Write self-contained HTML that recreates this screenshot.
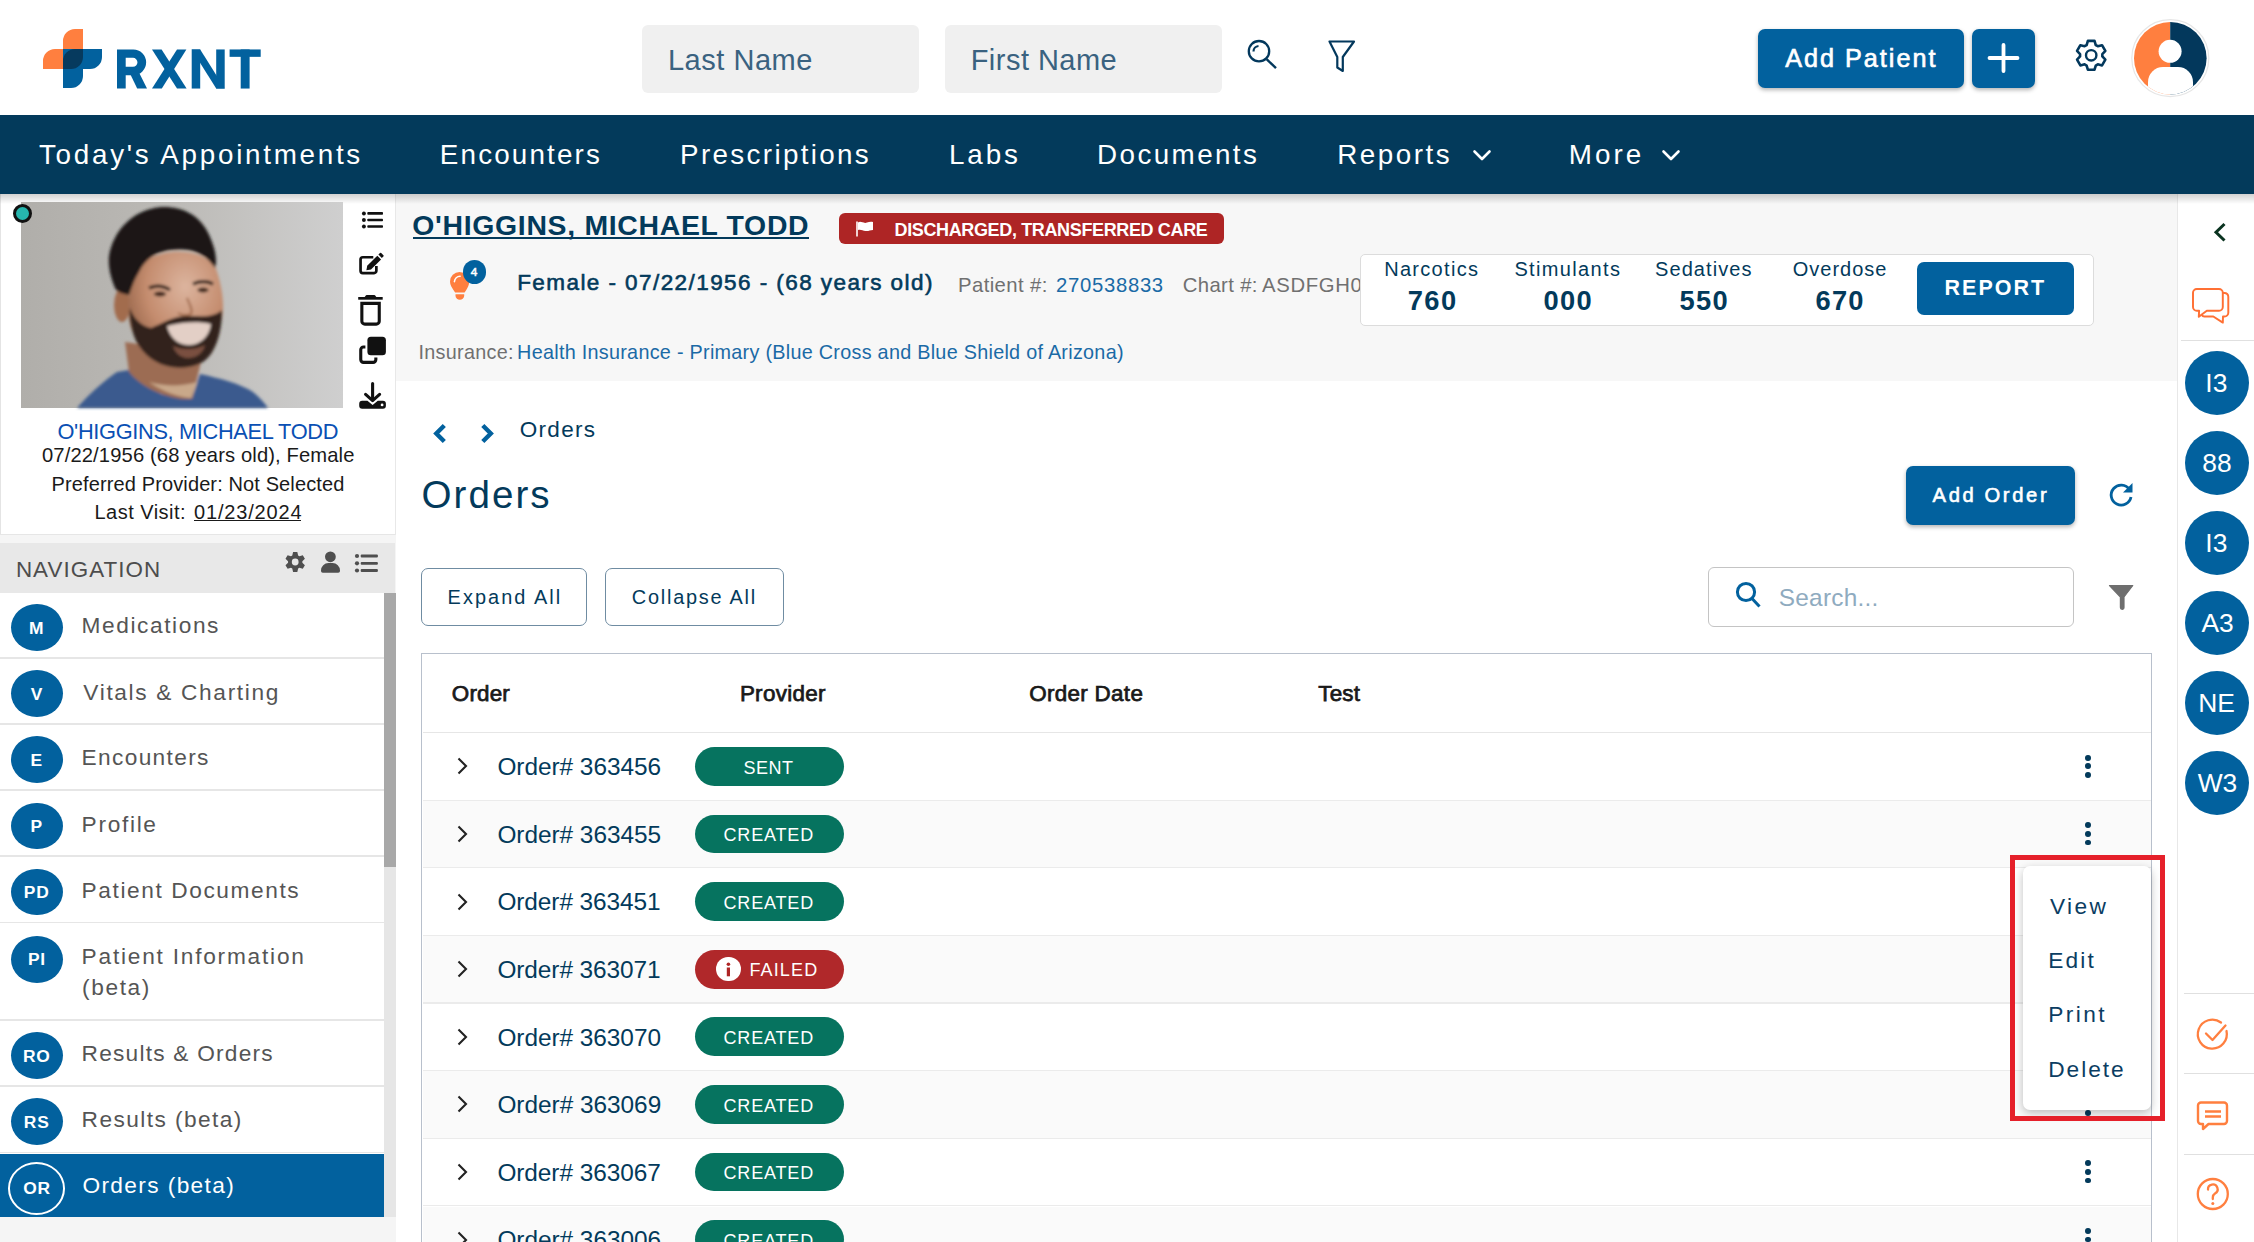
<!DOCTYPE html>
<html><head><meta charset="utf-8"><title>RXNT Orders</title>
<style>
html,body{margin:0;padding:0;width:2254px;height:1242px;overflow:hidden;background:#fff;font-family:"Liberation Sans", sans-serif;}
.t{position:absolute;line-height:1;white-space:nowrap;}
svg{overflow:visible}
</style></head><body>
<div style="position:absolute;left:0px;top:0px;width:2254px;height:115px;background:#fff"></div>
<div style="position:absolute;left:0px;top:115px;width:2254px;height:79px;background:#033a5b"></div>
<div style="position:absolute;left:0px;top:194px;width:396px;height:1048px;background:#f5f5f5"></div>
<div style="position:absolute;left:0px;top:194px;width:395px;height:341px;background:#fff"></div>
<div style="position:absolute;left:0px;top:194px;width:1px;height:341px;background:#e4e4e4"></div>
<div style="position:absolute;left:395px;top:194px;width:1px;height:341px;background:#e8e8e8"></div>
<div style="position:absolute;left:0px;top:534px;width:395px;height:1px;background:#e6e6e6"></div>
<div style="position:absolute;left:0px;top:543px;width:395px;height:50px;background:#e8e8e8"></div>
<div style="position:absolute;left:0px;top:593px;width:384px;height:624px;background:#fff"></div>
<div style="position:absolute;left:384px;top:593px;width:12px;height:624px;background:#e6e6e6"></div>
<div style="position:absolute;left:384px;top:593px;width:12px;height:274px;background:#a8a8a8"></div>
<div style="position:absolute;left:396px;top:194px;width:1781px;height:187px;background:#f7f7f7"></div>
<div style="position:absolute;left:396px;top:381px;width:1781px;height:861px;background:#fff"></div>
<div style="position:absolute;left:2177px;top:194px;width:77px;height:1048px;background:#fff"></div>
<div style="position:absolute;left:2177px;top:194px;width:1px;height:1048px;background:#e8e8e8"></div>
<div style="position:absolute;left:0px;top:194px;width:2254px;height:10px;background:linear-gradient(rgba(0,0,0,0.18),rgba(0,0,0,0))"></div>
<svg style="position:absolute;left:43px;top:29px" width="60" height="60" viewBox="0 0 60 60">
<path d="M32 0H40V40H0V32A12 12 0 0 1 12 20H20V12A12 12 0 0 1 32 0Z" fill="#ff7f3f"/>
<path d="M20 20H59V28A12 12 0 0 1 47 40H40V47A12 12 0 0 1 28 59H20Z" fill="#02619e"/>
<path d="M32 20H40V28A12 12 0 0 1 28 40H20V32A12 12 0 0 1 32 20Z" fill="#063a5e"/>
</svg>
<svg style="position:absolute;left:117px;top:48.6px" width="144" height="40" viewBox="0 0 144 39.1"><g fill="#02619e">
<path d="M0 0H16.3A12.85 12.85 0 0 1 16.3 25.7H8.7V39.1H0Z M8.7 8.4V17.3H16A4.45 4.45 0 0 0 16 8.4Z" fill-rule="evenodd"/>
<path d="M12 22H21.5L30 39.1H20.2Z"/>
<path d="M35 0H44.6L69.6 39.1H60Z"/><path d="M60 0H69.4L44.8 39.1H35Z"/>
<path d="M74.7 0H83.2V39.1H74.7Z"/><path d="M99.2 0H107.7V39.1H99.2Z"/><path d="M74.7 0H83.2L107.7 39.1H99.2Z"/>
<path d="M112.6 0H143.7V7.4H112.6Z"/><path d="M123.7 0H132.6V39.1H123.7Z"/>
</g></svg>
<div style="position:absolute;left:642px;top:25px;width:277px;height:68px;background:#f0f0f0;border-radius:6px"></div>
<div style="position:absolute;left:945px;top:25px;width:277px;height:68px;background:#f0f0f0;border-radius:6px"></div>
<div class="t" style="left:667.9px;top:45.6px;font-size:29.00px;color:#3a6280;letter-spacing:0.53px;">Last Name</div>
<div class="t" style="left:970.7px;top:45.6px;font-size:29.00px;color:#3a6280;letter-spacing:0.47px;">First Name</div>
<svg style="position:absolute;left:1240px;top:34px;" width="45" height="42" viewBox="0 0 45 42"><circle cx="19" cy="17.2" r="10.2" fill="none" stroke="#03385c" stroke-width="2.3"/><path d="M13.5 17.5A5.5 5.5 0 0 1 18.5 12" fill="none" stroke="#03385c" stroke-width="2.2"/><path d="M26.6 25.2L36 34.2" stroke="#03385c" stroke-width="2.4"/></svg>
<svg style="position:absolute;left:1320px;top:34px;" width="42" height="42" viewBox="0 0 42 42"><path d="M9.5 7.5H34L22.8 23V37L17.3 33.5V23Z" fill="none" stroke="#03385c" stroke-width="2.2" stroke-linejoin="round"/></svg>
<div style="position:absolute;left:1758px;top:29px;width:206px;height:59px;background:#02619e;border-radius:7px;box-shadow:0 2px 4px rgba(0,0,0,0.3)"></div>
<div style="position:absolute;left:1972px;top:29px;width:63px;height:59px;background:#02619e;border-radius:7px;box-shadow:0 2px 4px rgba(0,0,0,0.3)"></div>
<div class="t" style="left:1785.2px;top:45.9px;font-size:25.20px;color:#fff;letter-spacing:2.00px;-webkit-text-stroke:0.65px #fff;">Add Patient</div>
<svg style="position:absolute;left:1972px;top:29px;" width="63" height="59" viewBox="0 0 63 59"><path d="M31.5 16V42M17.5 29H45.5" stroke="#fff" stroke-width="3.8" stroke-linecap="round"/></svg>
<svg style="position:absolute;left:2070px;top:34px;" width="44" height="44" viewBox="0 0 44 44"><path d="M16.64 11.07 L17.87 6.88 L24.53 6.88 L25.76 11.07 L27.78 12.24 L32.02 11.21 L35.35 16.97 L32.34 20.13 L32.34 22.47 L35.35 25.63 L32.02 31.39 L27.78 30.36 L25.76 31.53 L24.53 35.72 L17.87 35.72 L16.64 31.53 L14.62 30.36 L10.38 31.39 L7.05 25.63 L10.06 22.47 L10.06 20.13 L7.05 16.97 L10.38 11.21 L14.62 12.24Z" fill="none" stroke="#03385c" stroke-width="2.6" stroke-linejoin="round"/><circle cx="21.2" cy="21.3" r="5.2" fill="none" stroke="#03385c" stroke-width="2.4"/></svg>
<svg style="position:absolute;left:2131px;top:19px" width="79" height="79" viewBox="0 0 79 79">
<circle cx="39.3" cy="39.2" r="38.5" fill="#fff" stroke="#e6e6e6" stroke-width="1.2"/>
<clipPath id="avc"><circle cx="39.3" cy="39.2" r="36.3"/></clipPath>
<g clip-path="url(#avc)"><rect x="0" y="0" width="39.2" height="79" fill="#ff7f3f"/><rect x="39.2" y="0" width="40" height="79" fill="#03385c"/>
<circle cx="39.1" cy="32.3" r="11.5" fill="#fff"/><path d="M17 63A15 15 0 0 1 32 48H47A15 15 0 0 1 62 63V80H17Z" fill="#fff"/></g>
</svg>
<div class="t" style="left:39.0px;top:140.9px;font-size:27.80px;color:#fff;letter-spacing:2.72px;">Today's Appointments</div>
<div class="t" style="left:439.8px;top:140.9px;font-size:27.80px;color:#fff;letter-spacing:2.17px;">Encounters</div>
<div class="t" style="left:680.1px;top:140.9px;font-size:27.80px;color:#fff;letter-spacing:2.33px;">Prescriptions</div>
<div class="t" style="left:949.0px;top:140.9px;font-size:27.80px;color:#fff;letter-spacing:2.86px;">Labs</div>
<div class="t" style="left:1097.1px;top:140.9px;font-size:27.80px;color:#fff;letter-spacing:2.40px;">Documents</div>
<div class="t" style="left:1337.2px;top:140.9px;font-size:27.80px;color:#fff;letter-spacing:2.52px;">Reports</div>
<div class="t" style="left:1568.8px;top:140.9px;font-size:27.80px;color:#fff;letter-spacing:3.01px;">More</div>
<svg style="position:absolute;left:1471.7px;top:145px;" width="20" height="20" viewBox="0 0 20 20"><path d="M2.5 6.5L10 14L17.5 6.5" fill="none" stroke="#fff" stroke-width="2.6" stroke-linecap="round" stroke-linejoin="round"/></svg>
<svg style="position:absolute;left:1661.3px;top:145px;" width="20" height="20" viewBox="0 0 20 20"><path d="M2.5 6.5L10 14L17.5 6.5" fill="none" stroke="#fff" stroke-width="2.6" stroke-linecap="round" stroke-linejoin="round"/></svg>
<svg style="position:absolute;left:21px;top:202px" width="322" height="206" viewBox="0 0 322 206">
<defs><linearGradient id="bgp" x1="0" x2="1" y1="0" y2="0"><stop offset="0" stop-color="#b0aeaa"/><stop offset="0.45" stop-color="#bbb9b5"/><stop offset="1" stop-color="#cfcfcf"/></linearGradient>
<radialGradient id="skin" cx="0.6" cy="0.3" r="0.75"><stop offset="0" stop-color="#dcb49e"/><stop offset="0.55" stop-color="#c48c6e"/><stop offset="1" stop-color="#8a5a40"/></radialGradient>
<filter id="bl" x="-20%" y="-20%" width="140%" height="140%"><feGaussianBlur stdDeviation="1.5"/></filter></defs>
<rect width="322" height="206" fill="url(#bgp)"/>
<g filter="url(#bl)">
<path d="M56 206C68 192 84 178 96 170L108 168L140 192L171 197L179 172C198 176 220 182 232 190C238 195 243 200 247 206Z" fill="#3a5a8e"/>
<path d="M104 140L108 170C118 182 135 193 160 197L171 197L180 160L170 150Z" fill="#9c6c52"/>
<path d="M128 180C142 190 158 195 170 196L176 180C160 185 142 184 128 180Z" fill="#c9a88a"/>
<ellipse cx="101" cy="103" rx="8" ry="17" fill="#a26c4e"/>
<path d="M108 92C106 110 108 128 115 134C122 150 140 162 163 166C180 164 192 150 201 116C204 100 200 80 194 64C180 48 150 45 125 58C115 68 110 80 108 92Z" fill="url(#skin)"/>
<path d="M88 54C92 30 110 8 140 5C160 4 182 12 191 40C195 50 196 60 194 66C186 54 174 45 150 48C135 50 125 56 118 70C112 80 110 88 108 93C102 92 96 90 94 86C90 76 87 66 88 54Z" fill="#1d1916"/>
<path d="M109 106C112 116 120 124 130 126C140 122 152 114 166 114C180 114 192 116 201 108C201 132 194 152 182 160C172 166 158 167 146 164C130 160 118 148 113 134C110 124 108 114 109 106Z" fill="#30221a"/>
<path d="M146 124C160 120 178 119 190 122C188 136 178 143 168 143C157 143 149 136 146 124Z" fill="#e3cfc6"/>
<path d="M152 144C160 148 176 148 184 143C182 152 174 156 167 156C160 156 154 151 152 144Z" fill="#7a5040"/><ellipse cx="139" cy="92" rx="6" ry="2.6" fill="#3a2418"/><ellipse cx="182" cy="88" rx="5.5" ry="2.4" fill="#3a2418"/><path d="M128 86C135 83 143 84 149 88" stroke="#2a1a12" stroke-width="3.2" fill="none"/>
<path d="M172 82C179 79 186 79 192 82" stroke="#2a1a12" stroke-width="3.2" fill="none"/>


<path d="M166 96C169 103 172 108 170 112C166 114 160 113 157 111" stroke="#a06a4c" stroke-width="2" fill="none"/>
</g>
</svg>
<div style="position:absolute;left:12.9px;top:203.5px;width:19px;height:19px;border-radius:50%;background:#26b5ad;border:3px solid #111;box-sizing:border-box"></div>
<svg style="position:absolute;left:350px;top:200px;" width="45" height="35" viewBox="350 200 45 35"><circle cx="363.9" cy="213.45" r="1.95" fill="#111"/><circle cx="363.9" cy="220" r="1.95" fill="#111"/><circle cx="363.9" cy="226.5" r="1.95" fill="#111"/><rect x="367.3" y="212.1" width="15.7" height="2.7" rx="0.8" fill="#111"/><rect x="367.3" y="218.65" width="15.7" height="2.7" rx="0.8" fill="#111"/><rect x="367.3" y="225.15" width="15.7" height="2.7" rx="0.8" fill="#111"/></svg>
<svg style="position:absolute;left:350px;top:245px;" width="40" height="40" viewBox="350 245 40 40"><path d="M373.3 257.25H362.8A2.25 2.25 0 0 0 360.55 259.5V270.8A2.25 2.25 0 0 0 362.8 273.05H374.1A2.25 2.25 0 0 0 376.35 270.8V265.9" fill="none" stroke="#111" stroke-width="2.7"/><path d="M366.4 270.2L367.2 265.8L377.3 255.7L381.1 259.5L371 269.6Z" fill="#111"/><path d="M378.4 254.6L380 253Q380.6 252.4 381.2 253L383.4 255.2Q384 255.8 383.4 256.4L381.8 258Z" fill="#111"/></svg>
<svg style="position:absolute;left:350px;top:290px;" width="40" height="40" viewBox="350 290 40 40"><path d="M358.2 297H382.7V299.7H358.2Z" fill="#111"/><path d="M364.7 297L366 295.3Q366.3 295 366.8 295H374.2Q374.7 295 375 295.3L376.3 297Z" fill="#111"/><path d="M361.85 303.35H379.25V321.15A3 3 0 0 1 376.25 324.15H364.85A3 3 0 0 1 361.85 321.15Z" fill="none" stroke="#111" stroke-width="3.1"/></svg>
<svg style="position:absolute;left:350px;top:330px;" width="40" height="40" viewBox="350 330 40 40"><rect x="367.4" y="336.8" width="18.5" height="18.5" rx="3.5" fill="#111"/><path d="M365.4 346.95H363.5A2.75 2.75 0 0 0 360.75 349.7V359.6A2.75 2.75 0 0 0 363.5 362.35H373.1A2.75 2.75 0 0 0 375.85 359.6V357.4" fill="none" stroke="#111" stroke-width="3.1"/></svg>
<svg style="position:absolute;left:350px;top:375px;" width="40" height="40" viewBox="350 375 40 40"><path d="M372.6 383.6V398" stroke="#111" stroke-width="3.1" stroke-linecap="round"/><path d="M365.6 394.4L372.6 400.6L379.6 394.4" fill="none" stroke="#111" stroke-width="3.1" stroke-linecap="round" stroke-linejoin="round"/><path d="M359.2 403.8A3 3 0 0 1 362.2 400.8H367.4L372.6 405L377.8 400.8H382.9A3 3 0 0 1 385.9 403.8V405.7A3 3 0 0 1 382.9 408.7H362.2A3 3 0 0 1 359.2 405.7Z" fill="#111"/><circle cx="382.1" cy="404.9" r="1.4" fill="#fff"/></svg>
<div class="t" style="left:57.5px;top:421.0px;font-size:21.80px;color:#0a50b4;letter-spacing:-0.34px;">O'HIGGINS, MICHAEL TODD</div>
<div class="t" style="left:42.0px;top:445.4px;font-size:20.20px;color:#1a1a1a;letter-spacing:0.12px;">07/22/1956 (68 years old), Female</div>
<div class="t" style="left:51.6px;top:473.5px;font-size:20.00px;color:#1a1a1a;letter-spacing:0.12px;">Preferred Provider: Not Selected</div>
<div class="t" style="left:94.5px;top:502.3px;font-size:20.00px;color:#1a1a1a;letter-spacing:0.47px;">Last Visit:</div>
<div class="t" style="left:194.1px;top:502.3px;font-size:20.00px;color:#1a1a1a;letter-spacing:0.82px;">01/23/2024</div>
<div style="position:absolute;left:194px;top:520px;width:107px;height:1.3px;background:#1a1a1a"></div>
<div class="t" style="left:15.9px;top:558.7px;font-size:22.40px;color:#4d4d4d;letter-spacing:1.06px;">NAVIGATION</div>
<svg style="position:absolute;left:283px;top:550px;" width="24" height="24" viewBox="0 0 24 24"><path d="M9.27 5.42 L10.08 2.02 L14.32 2.02 L15.13 5.42 L16.43 6.18 L19.78 5.17 L21.90 8.85 L19.36 11.25 L19.36 12.75 L21.90 15.15 L19.78 18.83 L16.43 17.82 L15.13 18.58 L14.32 21.98 L10.08 21.98 L9.27 18.58 L7.97 17.82 L4.62 18.83 L2.50 15.15 L5.04 12.75 L5.04 11.25 L2.50 8.85 L4.62 5.17 L7.97 6.18Z" fill="#4f4f4f"/><circle cx="12.2" cy="12" r="3.4" fill="#e8e8e8"/></svg>
<svg style="position:absolute;left:318px;top:548px;" width="26" height="28" viewBox="0 0 26 28"><circle cx="12.4" cy="8.8" r="5.4" fill="#4f4f4f"/><path d="M3 22.5A7.5 7.5 0 0 1 10.5 15H14.5A7.5 7.5 0 0 1 22 22.5V23A1.8 1.8 0 0 1 20.2 24.8H4.8A1.8 1.8 0 0 1 3 23Z" fill="#4f4f4f"/></svg>
<svg style="position:absolute;left:352px;top:550px;" width="30" height="26" viewBox="0 0 30 26"><circle cx="5" cy="6" r="2.1" fill="#4f4f4f"/><circle cx="5" cy="13.3" r="2.1" fill="#4f4f4f"/><circle cx="5" cy="20.5" r="2.1" fill="#4f4f4f"/><rect x="8.7" y="4.6" width="17.2" height="2.8" rx="1" fill="#4f4f4f"/><rect x="8.7" y="11.9" width="17.2" height="2.8" rx="1" fill="#4f4f4f"/><rect x="8.7" y="19.1" width="17.2" height="2.8" rx="1" fill="#4f4f4f"/></svg>
<div style="position:absolute;left:11px;top:604.1px;width:51.8px;height:46.8px;background:#02619e;border-radius:50%"></div>
<div style="position:absolute;left:0px;top:657.0px;width:384px;height:1.5px;background:#e6e6e6"></div>
<div class="t" style="left:81.6px;top:613.8px;font-size:22.70px;color:#555555;letter-spacing:1.58px;">Medications</div>
<div style="position:absolute;left:11px;top:670.4px;width:51.8px;height:46.8px;background:#02619e;border-radius:50%"></div>
<div style="position:absolute;left:0px;top:723.1px;width:384px;height:1.5px;background:#e6e6e6"></div>
<div class="t" style="left:83.3px;top:680.6px;font-size:22.70px;color:#555555;letter-spacing:1.66px;">Vitals &amp; Charting</div>
<div style="position:absolute;left:11px;top:736.4px;width:51.8px;height:46.8px;background:#02619e;border-radius:50%"></div>
<div style="position:absolute;left:0px;top:789.3px;width:384px;height:1.5px;background:#e6e6e6"></div>
<div class="t" style="left:81.6px;top:746.3px;font-size:22.70px;color:#555555;letter-spacing:1.34px;">Encounters</div>
<div style="position:absolute;left:11px;top:802.6px;width:51.8px;height:46.8px;background:#02619e;border-radius:50%"></div>
<div style="position:absolute;left:0px;top:855.4px;width:384px;height:1.5px;background:#e6e6e6"></div>
<div class="t" style="left:81.6px;top:812.5px;font-size:22.70px;color:#555555;letter-spacing:1.68px;">Profile</div>
<div style="position:absolute;left:11px;top:868.6px;width:51.8px;height:46.8px;background:#02619e;border-radius:50%"></div>
<div style="position:absolute;left:0px;top:921.5px;width:384px;height:1.5px;background:#e6e6e6"></div>
<div class="t" style="left:81.6px;top:878.6px;font-size:22.70px;color:#555555;letter-spacing:1.59px;">Patient Documents</div>
<div class="t" style="left:29.1px;top:619.9px;font-size:17.40px;color:#fff;font-weight:bold;">M</div>
<div class="t" style="left:30.7px;top:686.2px;font-size:17.40px;color:#fff;font-weight:bold;">V</div>
<div class="t" style="left:30.5px;top:752.2px;font-size:17.40px;color:#fff;font-weight:bold;">E</div>
<div class="t" style="left:30.4px;top:818.2px;font-size:17.40px;color:#fff;font-weight:bold;">P</div>
<div class="t" style="left:23.8px;top:884.2px;font-size:17.40px;color:#fff;letter-spacing:0.80px;font-weight:bold;">PD</div>
<div style="position:absolute;left:11px;top:935.8px;width:51.8px;height:46.8px;background:#02619e;border-radius:50%"></div>
<div class="t" style="left:27.9px;top:951.2px;font-size:17.40px;color:#fff;letter-spacing:0.80px;font-weight:bold;">PI</div>
<div class="t" style="left:81.6px;top:945.3px;font-size:22.70px;color:#555555;letter-spacing:1.77px;">Patient Information</div>
<div class="t" style="left:82.0px;top:976.0px;font-size:22.70px;color:#555555;letter-spacing:1.62px;">(beta)</div>
<div style="position:absolute;left:0px;top:1019.2px;width:384px;height:1.5px;background:#e6e6e6"></div>
<div style="position:absolute;left:11px;top:1032.3px;width:51.8px;height:46.8px;background:#02619e;border-radius:50%"></div>
<div class="t" style="left:22.9px;top:1047.9px;font-size:17.40px;color:#fff;letter-spacing:0.80px;font-weight:bold;">RO</div>
<div class="t" style="left:81.6px;top:1041.6px;font-size:22.70px;color:#555555;letter-spacing:1.22px;">Results &amp; Orders</div>
<div style="position:absolute;left:0px;top:1085.4px;width:384px;height:1.5px;background:#e6e6e6"></div>
<div style="position:absolute;left:11px;top:1098.2px;width:51.8px;height:46.8px;background:#02619e;border-radius:50%"></div>
<div class="t" style="left:23.8px;top:1113.9px;font-size:17.40px;color:#fff;letter-spacing:0.80px;font-weight:bold;">RS</div>
<div class="t" style="left:81.6px;top:1108.0px;font-size:22.70px;color:#555555;letter-spacing:1.43px;">Results (beta)</div>
<div style="position:absolute;left:0px;top:1151.5px;width:384px;height:1.5px;background:#e6e6e6"></div>
<div style="position:absolute;left:0px;top:1153.5px;width:384px;height:63.5px;background:#02619e"></div>
<div style="position:absolute;left:8.3px;top:1162px;width:57px;height:52.5px;border:2.6px solid #fff;border-radius:50%;box-sizing:border-box"></div>
<div class="t" style="left:23.2px;top:1180.2px;font-size:17.40px;color:#fff;letter-spacing:0.80px;font-weight:bold;">OR</div>
<div class="t" style="left:82.4px;top:1173.8px;font-size:22.70px;color:#fff;letter-spacing:1.38px;">Orders (beta)</div>
<div class="t" style="left:412.3px;top:211.4px;font-size:28.40px;color:#033a5b;letter-spacing:0.69px;font-weight:bold;">O'HIGGINS, MICHAEL TODD</div>
<div style="position:absolute;left:412.5px;top:236.8px;width:396px;height:2.3px;background:#033a5b"></div>
<div style="position:absolute;left:839px;top:213px;width:385px;height:30.7px;background:#ae2525;border-radius:6px"></div>
<svg style="position:absolute;left:854px;top:220px;" width="22" height="18" viewBox="0 0 22 18"><path d="M3 1.5V16.5" stroke="#fff" stroke-width="1.6"/><path d="M4 2.5C7 0.5 9.5 4 13 2.5C15 1.8 17 1.5 19 2V10C16 10 14.5 11.5 11.5 11C8.5 10.5 6.5 9 4 10Z" fill="#fff"/></svg>
<div class="t" style="left:894.5px;top:220.6px;font-size:18.00px;color:#fff;letter-spacing:-0.36px;font-weight:bold;">DISCHARGED, TRANSFERRED CARE</div>
<svg style="position:absolute;left:445px;top:268px;" width="30" height="34" viewBox="0 0 30 34"><path d="M14.6 3.9A9.6 9.6 0 0 0 5 13.5C5 17.2 7 19.8 8.6 22.2L10.1 24.6H19.6L21.1 22.2C22.7 19.8 24.2 17.2 24.2 13.5A9.6 9.6 0 0 0 14.6 3.9Z" fill="#ff7f3f"/><path d="M10.5 26.3H19.2V27.4A4.35 4.35 0 0 1 10.5 27.4Z" fill="#ff7f3f"/><path d="M9.4 13.6A6 6 0 0 1 15.1 8.3" stroke="#fff" stroke-width="1.6" fill="none" stroke-linecap="round"/></svg>
<div style="position:absolute;left:462.5px;top:260.2px;width:23.4px;height:23.4px;background:#02619e;border-radius:50%"></div>
<div class="t" style="left:470.8px;top:266.7px;font-size:11.80px;color:#fff;-webkit-text-stroke:0.5px #fff;">4</div>
<div class="t" style="left:517.2px;top:272.4px;font-size:22.50px;color:#033a5b;letter-spacing:1.43px;-webkit-text-stroke:0.6px #033a5b;">Female - 07/22/1956 - (68 years old)</div>
<div class="t" style="left:958.1px;top:274.5px;font-size:20.30px;color:#707070;letter-spacing:0.39px;">Patient #:</div>
<div class="t" style="left:1056.1px;top:274.5px;font-size:20.30px;color:#1a6aa6;letter-spacing:0.69px;">270538833</div>
<div class="t" style="left:1182.8px;top:274.5px;font-size:20.30px;color:#707070;letter-spacing:0.35px;">Chart #:</div>
<div class="t" style="left:1262.1px;top:274.5px;font-size:20.30px;color:#707070;letter-spacing:0.66px;">ASDFGH0999</div>
<div class="t" style="left:418.4px;top:342.6px;font-size:19.80px;color:#707070;letter-spacing:0.31px;">Insurance:</div>
<div class="t" style="left:517.1px;top:342.6px;font-size:19.80px;color:#1a6aa6;letter-spacing:0.28px;">Health Insurance - Primary (Blue Cross and Blue Shield of Arizona)</div>
<div style="position:absolute;left:1359.5px;top:253.6px;width:734px;height:72.5px;background:#fff;border:1px solid #dcdcdc;border-radius:5px;box-sizing:border-box"></div>
<div class="t" style="left:1384.2px;top:258.8px;font-size:20.00px;color:#033a5b;letter-spacing:1.30px;">Narcotics</div>
<div class="t" style="left:1407.8px;top:287.4px;font-size:27.30px;color:#033a5b;letter-spacing:1.36px;font-weight:bold;">760</div>
<div class="t" style="left:1514.4px;top:258.8px;font-size:20.00px;color:#033a5b;letter-spacing:1.36px;">Stimulants</div>
<div class="t" style="left:1543.4px;top:287.4px;font-size:27.30px;color:#033a5b;letter-spacing:1.41px;font-weight:bold;">000</div>
<div class="t" style="left:1655.0px;top:258.8px;font-size:20.00px;color:#033a5b;letter-spacing:1.09px;">Sedatives</div>
<div class="t" style="left:1679.4px;top:287.4px;font-size:27.30px;color:#033a5b;letter-spacing:1.38px;font-weight:bold;">550</div>
<div class="t" style="left:1792.8px;top:258.8px;font-size:20.00px;color:#033a5b;letter-spacing:0.99px;">Overdose</div>
<div class="t" style="left:1815.6px;top:287.4px;font-size:27.30px;color:#033a5b;letter-spacing:1.20px;font-weight:bold;">670</div>
<div style="position:absolute;left:1916.9px;top:262.1px;width:156.8px;height:52.8px;background:#02619e;border-radius:7px"></div>
<div class="t" style="left:1944.5px;top:278.4px;font-size:21.50px;color:#fff;letter-spacing:2.03px;font-weight:bold;">REPORT</div>
<svg style="position:absolute;left:425px;top:418px;" width="30" height="30" viewBox="0 0 30 30"><path d="M19.3 7.5L11.3 15.5L19.3 23.5" fill="none" stroke="#02619e" stroke-width="4.4"/></svg>
<svg style="position:absolute;left:473px;top:418px;" width="30" height="30" viewBox="0 0 30 30"><path d="M9.8 7.5L17.8 15.5L9.8 23.5" fill="none" stroke="#02619e" stroke-width="4.4"/></svg>
<div class="t" style="left:519.8px;top:419.4px;font-size:22.50px;color:#033a5b;letter-spacing:1.29px;">Orders</div>
<div class="t" style="left:421.5px;top:475.8px;font-size:38.60px;color:#033a5b;letter-spacing:2.05px;">Orders</div>
<div style="position:absolute;left:1906.1px;top:466px;width:168.8px;height:58.9px;background:#02619e;border-radius:7px;box-shadow:0 2px 4px rgba(0,0,0,0.3)"></div>
<div class="t" style="left:1932.6px;top:485.2px;font-size:20.20px;color:#fff;letter-spacing:2.61px;-webkit-text-stroke:0.6px #fff;">Add Order</div>
<svg style="position:absolute;left:2104.3px;top:477.3px;" width="34" height="34" viewBox="0 0 34 34"><path d="M25.5 12.5A10 10 0 1 0 27 20" fill="none" stroke="#02619e" stroke-width="2.8"/><path d="M28.5 6V15.5H19Z" fill="#02619e"/></svg>
<div style="position:absolute;left:421.3px;top:568px;width:166.2px;height:58.3px;border:1.5px solid #6f8ca2;border-radius:7px;box-sizing:border-box"></div>
<div style="position:absolute;left:605.1px;top:568px;width:178.5px;height:58.3px;border:1.5px solid #6f8ca2;border-radius:7px;box-sizing:border-box"></div>
<div class="t" style="left:447.6px;top:588.2px;font-size:19.90px;color:#033a5b;letter-spacing:2.07px;">Expand All</div>
<div class="t" style="left:631.8px;top:588.2px;font-size:19.90px;color:#033a5b;letter-spacing:1.77px;">Collapse All</div>
<div style="position:absolute;left:1708.4px;top:567.4px;width:366px;height:60.1px;border:1.2px solid #c4c4c4;border-radius:6px;box-sizing:border-box;background:#fff"></div>
<svg style="position:absolute;left:1730px;top:578px;" width="36" height="36" viewBox="0 0 36 36"><circle cx="16" cy="14" r="8.6" fill="none" stroke="#02619e" stroke-width="3"/><path d="M22 20.5L29.5 28.5" stroke="#02619e" stroke-width="3"/></svg>
<div class="t" style="left:1778.8px;top:586.2px;font-size:24.40px;color:#8fabbf;letter-spacing:0.24px;">Search...</div>
<svg style="position:absolute;left:2105px;top:580px;" width="32" height="32" viewBox="0 0 32 32"><path d="M4.5 5.5H27.8L19 17V27.5A1.8 1.8 0 0 1 15.4 27.5V17Z" fill="#6e6e6e" stroke="#6e6e6e" stroke-width="1.2" stroke-linejoin="round"/></svg>
<div style="position:absolute;left:421.4px;top:653.4px;width:1730.6px;height:598.6px;border:1.2px solid #b8c0cc;box-sizing:border-box;background:#fff"></div>
<div style="position:absolute;left:422.6px;top:731.7px;width:1728.8px;height:1.3px;background:#e6e6e6"></div>
<div class="t" style="left:451.8px;top:682.9px;font-size:22.40px;color:#1a1a1a;letter-spacing:0.20px;-webkit-text-stroke:0.75px #1a1a1a;">Order</div>
<div class="t" style="left:739.9px;top:682.9px;font-size:22.40px;color:#1a1a1a;letter-spacing:0.30px;-webkit-text-stroke:0.75px #1a1a1a;">Provider</div>
<div class="t" style="left:1029.3px;top:682.9px;font-size:22.40px;color:#1a1a1a;letter-spacing:0.31px;-webkit-text-stroke:0.75px #1a1a1a;">Order Date</div>
<div class="t" style="left:1318.2px;top:682.9px;font-size:22.40px;color:#1a1a1a;letter-spacing:0.26px;-webkit-text-stroke:0.75px #1a1a1a;">Test</div>
<svg style="position:absolute;left:450px;top:754.3px;" width="24" height="24" viewBox="0 0 24 24"><path d="M8.5 4.5L16 12L8.5 19.5" fill="none" stroke="#222" stroke-width="2.1"/></svg>
<div class="t" style="left:497.4px;top:755.1px;font-size:24.40px;color:#033a5b;letter-spacing:-0.03px;">Order# 363456</div>
<div style="position:absolute;left:694.9px;top:746.9px;width:148.9px;height:38.9px;background:#06735f;border-radius:20px"></div>
<div class="t" style="left:743.6px;top:758.6px;font-size:18.00px;color:#fff;letter-spacing:0.50px;">SENT</div>
<div style="position:absolute;left:2085.3px;top:754.8px;width:5.8px;height:5.8px;background:#033a5b;border-radius:50%"></div>
<div style="position:absolute;left:2085.3px;top:763.4px;width:5.8px;height:5.8px;background:#033a5b;border-radius:50%"></div>
<div style="position:absolute;left:2085.3px;top:772.1px;width:5.8px;height:5.8px;background:#033a5b;border-radius:50%"></div>
<div style="position:absolute;left:422.6px;top:800.9px;width:1728.8px;height:66.8px;background:#fafafa"></div>
<div style="position:absolute;left:422.6px;top:799.6px;width:1728.8px;height:1.3px;background:#ebebeb"></div>
<svg style="position:absolute;left:450px;top:821.9px;" width="24" height="24" viewBox="0 0 24 24"><path d="M8.5 4.5L16 12L8.5 19.5" fill="none" stroke="#222" stroke-width="2.1"/></svg>
<div class="t" style="left:497.4px;top:822.7px;font-size:24.40px;color:#033a5b;letter-spacing:-0.03px;">Order# 363455</div>
<div style="position:absolute;left:694.9px;top:814.5px;width:148.9px;height:38.9px;background:#06735f;border-radius:20px"></div>
<div class="t" style="left:723.5px;top:826.2px;font-size:18.00px;color:#fff;letter-spacing:0.83px;">CREATED</div>
<div style="position:absolute;left:2085.3px;top:822.4px;width:5.8px;height:5.8px;background:#033a5b;border-radius:50%"></div>
<div style="position:absolute;left:2085.3px;top:831.0px;width:5.8px;height:5.8px;background:#033a5b;border-radius:50%"></div>
<div style="position:absolute;left:2085.3px;top:839.7px;width:5.8px;height:5.8px;background:#033a5b;border-radius:50%"></div>
<div style="position:absolute;left:422.6px;top:867.2px;width:1728.8px;height:1.3px;background:#ebebeb"></div>
<svg style="position:absolute;left:450px;top:889.5px;" width="24" height="24" viewBox="0 0 24 24"><path d="M8.5 4.5L16 12L8.5 19.5" fill="none" stroke="#222" stroke-width="2.1"/></svg>
<div class="t" style="left:497.4px;top:890.3px;font-size:24.40px;color:#033a5b;letter-spacing:-0.07px;">Order# 363451</div>
<div style="position:absolute;left:694.9px;top:882.1px;width:148.9px;height:38.9px;background:#06735f;border-radius:20px"></div>
<div class="t" style="left:723.5px;top:893.8px;font-size:18.00px;color:#fff;letter-spacing:0.83px;">CREATED</div>
<div style="position:absolute;left:2085.3px;top:890.0px;width:5.8px;height:5.8px;background:#033a5b;border-radius:50%"></div>
<div style="position:absolute;left:2085.3px;top:898.6px;width:5.8px;height:5.8px;background:#033a5b;border-radius:50%"></div>
<div style="position:absolute;left:2085.3px;top:907.3px;width:5.8px;height:5.8px;background:#033a5b;border-radius:50%"></div>
<div style="position:absolute;left:422.6px;top:936.0999999999999px;width:1728.8px;height:66.8px;background:#fafafa"></div>
<div style="position:absolute;left:422.6px;top:934.8px;width:1728.8px;height:1.3px;background:#ebebeb"></div>
<svg style="position:absolute;left:450px;top:957.0999999999999px;" width="24" height="24" viewBox="0 0 24 24"><path d="M8.5 4.5L16 12L8.5 19.5" fill="none" stroke="#222" stroke-width="2.1"/></svg>
<div class="t" style="left:497.4px;top:957.9px;font-size:24.40px;color:#033a5b;letter-spacing:-0.07px;">Order# 363071</div>
<div style="position:absolute;left:694.9px;top:949.7px;width:148.9px;height:38.9px;background:#b0282a;border-radius:20px"></div>
<div style="position:absolute;left:716px;top:956.7px;width:24.8px;height:24.8px;background:#fff;border-radius:50%"></div>
<svg style="position:absolute;left:716px;top:956.7px;" width="25" height="25" viewBox="0 0 25 25"><circle cx="12.4" cy="7.3" r="1.8" fill="#ae2525"/><rect x="10.8" y="10.5" width="3.2" height="8.8" fill="#ae2525"/></svg>
<div class="t" style="left:749.4px;top:961.4px;font-size:18.00px;color:#fff;letter-spacing:1.15px;">FAILED</div>
<div style="position:absolute;left:2085.3px;top:957.6px;width:5.8px;height:5.8px;background:#033a5b;border-radius:50%"></div>
<div style="position:absolute;left:2085.3px;top:966.2px;width:5.8px;height:5.8px;background:#033a5b;border-radius:50%"></div>
<div style="position:absolute;left:2085.3px;top:974.9px;width:5.8px;height:5.8px;background:#033a5b;border-radius:50%"></div>
<div style="position:absolute;left:422.6px;top:1002.4px;width:1728.8px;height:1.3px;background:#ebebeb"></div>
<svg style="position:absolute;left:450px;top:1024.7px;" width="24" height="24" viewBox="0 0 24 24"><path d="M8.5 4.5L16 12L8.5 19.5" fill="none" stroke="#222" stroke-width="2.1"/></svg>
<div class="t" style="left:497.4px;top:1025.5px;font-size:24.40px;color:#033a5b;letter-spacing:-0.04px;">Order# 363070</div>
<div style="position:absolute;left:694.9px;top:1017.3px;width:148.9px;height:38.9px;background:#06735f;border-radius:20px"></div>
<div class="t" style="left:723.5px;top:1029.0px;font-size:18.00px;color:#fff;letter-spacing:0.83px;">CREATED</div>
<div style="position:absolute;left:2085.3px;top:1025.2px;width:5.8px;height:5.8px;background:#033a5b;border-radius:50%"></div>
<div style="position:absolute;left:2085.3px;top:1033.8px;width:5.8px;height:5.8px;background:#033a5b;border-radius:50%"></div>
<div style="position:absolute;left:2085.3px;top:1042.5px;width:5.8px;height:5.8px;background:#033a5b;border-radius:50%"></div>
<div style="position:absolute;left:422.6px;top:1071.3px;width:1728.8px;height:66.8px;background:#fafafa"></div>
<div style="position:absolute;left:422.6px;top:1070.0px;width:1728.8px;height:1.3px;background:#ebebeb"></div>
<svg style="position:absolute;left:450px;top:1092.3px;" width="24" height="24" viewBox="0 0 24 24"><path d="M8.5 4.5L16 12L8.5 19.5" fill="none" stroke="#222" stroke-width="2.1"/></svg>
<div class="t" style="left:497.4px;top:1093.1px;font-size:24.40px;color:#033a5b;letter-spacing:-0.02px;">Order# 363069</div>
<div style="position:absolute;left:694.9px;top:1084.9px;width:148.9px;height:38.9px;background:#06735f;border-radius:20px"></div>
<div class="t" style="left:723.5px;top:1096.6px;font-size:18.00px;color:#fff;letter-spacing:0.83px;">CREATED</div>
<div style="position:absolute;left:2085.3px;top:1092.8px;width:5.8px;height:5.8px;background:#033a5b;border-radius:50%"></div>
<div style="position:absolute;left:2085.3px;top:1101.4px;width:5.8px;height:5.8px;background:#033a5b;border-radius:50%"></div>
<div style="position:absolute;left:2085.3px;top:1110.1px;width:5.8px;height:5.8px;background:#033a5b;border-radius:50%"></div>
<div style="position:absolute;left:422.6px;top:1137.6px;width:1728.8px;height:1.3px;background:#ebebeb"></div>
<svg style="position:absolute;left:450px;top:1159.8999999999999px;" width="24" height="24" viewBox="0 0 24 24"><path d="M8.5 4.5L16 12L8.5 19.5" fill="none" stroke="#222" stroke-width="2.1"/></svg>
<div class="t" style="left:497.4px;top:1160.7px;font-size:24.40px;color:#033a5b;letter-spacing:-0.06px;">Order# 363067</div>
<div style="position:absolute;left:694.9px;top:1152.5px;width:148.9px;height:38.9px;background:#06735f;border-radius:20px"></div>
<div class="t" style="left:723.5px;top:1164.2px;font-size:18.00px;color:#fff;letter-spacing:0.83px;">CREATED</div>
<div style="position:absolute;left:2085.3px;top:1160.4px;width:5.8px;height:5.8px;background:#033a5b;border-radius:50%"></div>
<div style="position:absolute;left:2085.3px;top:1169.0px;width:5.8px;height:5.8px;background:#033a5b;border-radius:50%"></div>
<div style="position:absolute;left:2085.3px;top:1177.7px;width:5.8px;height:5.8px;background:#033a5b;border-radius:50%"></div>
<div style="position:absolute;left:422.6px;top:1206.4999999999998px;width:1728.8px;height:66.8px;background:#fafafa"></div>
<div style="position:absolute;left:422.6px;top:1205.1999999999998px;width:1728.8px;height:1.3px;background:#ebebeb"></div>
<svg style="position:absolute;left:450px;top:1227.4999999999998px;" width="24" height="24" viewBox="0 0 24 24"><path d="M8.5 4.5L16 12L8.5 19.5" fill="none" stroke="#222" stroke-width="2.1"/></svg>
<div class="t" style="left:497.4px;top:1228.3px;font-size:24.40px;color:#033a5b;letter-spacing:-0.03px;">Order# 363006</div>
<div style="position:absolute;left:694.9px;top:1220.1px;width:148.9px;height:38.9px;background:#06735f;border-radius:20px"></div>
<div class="t" style="left:723.5px;top:1231.8px;font-size:18.00px;color:#fff;letter-spacing:0.83px;">CREATED</div>
<div style="position:absolute;left:2085.3px;top:1228.0px;width:5.8px;height:5.8px;background:#033a5b;border-radius:50%"></div>
<div style="position:absolute;left:2085.3px;top:1236.6px;width:5.8px;height:5.8px;background:#033a5b;border-radius:50%"></div>
<div style="position:absolute;left:2085.3px;top:1245.3px;width:5.8px;height:5.8px;background:#033a5b;border-radius:50%"></div>
<div style="position:absolute;left:2022.9px;top:865.6px;width:127.8px;height:244.3px;background:#fff;border-radius:7px;box-shadow:0 3px 10px rgba(0,0,0,0.25)"></div>
<div class="t" style="left:2049.9px;top:895.2px;font-size:22.70px;color:#0b3d62;letter-spacing:2.44px;">View</div>
<div class="t" style="left:2048.2px;top:949.1px;font-size:22.70px;color:#0b3d62;letter-spacing:2.16px;">Edit</div>
<div class="t" style="left:2048.2px;top:1003.4px;font-size:22.70px;color:#0b3d62;letter-spacing:2.42px;">Print</div>
<div class="t" style="left:2048.2px;top:1058.0px;font-size:22.70px;color:#0b3d62;letter-spacing:1.99px;">Delete</div>
<div style="position:absolute;left:2010px;top:855px;width:154.7px;height:266.4px;border:5px solid #e5202a;box-sizing:border-box"></div>
<svg style="position:absolute;left:2205px;top:218px;" width="28" height="28" viewBox="0 0 28 28"><path d="M19.5 6L11 14.2L19.5 22.5" fill="none" stroke="#0a3320" stroke-width="3"/></svg>
<svg style="position:absolute;left:2180px;top:275px;" width="60" height="60" viewBox="0 0 60 60"><path d="M16.8 14H39A3.8 3.8 0 0 1 42.8 17.8V31.9A3.8 3.8 0 0 1 39 35.7H26.8L18.8 41.8L19.1 35.7H16.8A3.8 3.8 0 0 1 13 31.9V17.8A3.8 3.8 0 0 1 16.8 14Z" fill="none" stroke="#ff7034" stroke-width="1.95" stroke-linejoin="round"/><path d="M43 17.9H44.5A3.8 3.8 0 0 1 48.3 21.7V37.7A3.8 3.8 0 0 1 44.5 41.5H43L42.8 47.6L33.3 41.5H24.5A3 3 0 0 1 21.8 40" fill="none" stroke="#ff7034" stroke-width="1.95" stroke-linejoin="round"/></svg>
<div style="position:absolute;left:2181px;top:340.3px;width:73px;height:1.2px;background:#e0e0e0"></div>
<div style="position:absolute;left:2184.9px;top:350.8px;width:64.3px;height:64.3px;background:#02619e;border-radius:50%"></div>
<div class="t" style="left:2205.3px;top:369.8px;font-size:26.40px;color:#fff;">I3</div>
<div style="position:absolute;left:2184.9px;top:430.8px;width:64.3px;height:64.3px;background:#02619e;border-radius:50%"></div>
<div class="t" style="left:2202.3px;top:449.8px;font-size:26.40px;color:#fff;">88</div>
<div style="position:absolute;left:2184.9px;top:510.8px;width:64.3px;height:64.3px;background:#02619e;border-radius:50%"></div>
<div class="t" style="left:2205.3px;top:529.8px;font-size:26.40px;color:#fff;">I3</div>
<div style="position:absolute;left:2184.9px;top:590.8px;width:64.3px;height:64.3px;background:#02619e;border-radius:50%"></div>
<div class="t" style="left:2201.4px;top:609.8px;font-size:26.40px;color:#fff;">A3</div>
<div style="position:absolute;left:2184.9px;top:670.8px;width:64.3px;height:64.3px;background:#02619e;border-radius:50%"></div>
<div class="t" style="left:2198.2px;top:689.8px;font-size:26.40px;color:#fff;">NE</div>
<div style="position:absolute;left:2184.9px;top:750.8px;width:64.3px;height:64.3px;background:#02619e;border-radius:50%"></div>
<div class="t" style="left:2197.7px;top:769.8px;font-size:26.40px;color:#fff;">W3</div>
<div style="position:absolute;left:2184px;top:993px;width:70px;height:1.2px;background:#e0e0e0"></div>
<div style="position:absolute;left:2184px;top:1072.8px;width:70px;height:1.2px;background:#e0e0e0"></div>
<div style="position:absolute;left:2184px;top:1154px;width:70px;height:1.2px;background:#e0e0e0"></div>
<svg style="position:absolute;left:2193px;top:1014px;" width="40" height="40" viewBox="0 0 40 40"><path d="M33.5 17A14.5 14.5 0 1 1 28 8.5" fill="none" stroke="#ff7f3f" stroke-width="2.3" stroke-linecap="round"/><path d="M13 19.5L19.5 26L32.5 11.5" fill="none" stroke="#ff7f3f" stroke-width="2.3" stroke-linecap="round" stroke-linejoin="round"/></svg>
<svg style="position:absolute;left:2193px;top:1098px;" width="40" height="40" viewBox="0 0 40 40"><path d="M8 4.5H31A3 3 0 0 1 34 7.5V23A3 3 0 0 1 31 26H15.5L10 31V26H8A3 3 0 0 1 5 23V7.5A3 3 0 0 1 8 4.5Z" fill="none" stroke="#ff7f3f" stroke-width="2.4" stroke-linejoin="round"/><path d="M12 13.5H28M12 18.5H28" stroke="#ff7f3f" stroke-width="2.4"/></svg>
<svg style="position:absolute;left:2193px;top:1174px;" width="40" height="40" viewBox="0 0 40 40"><circle cx="19.8" cy="20" r="15" fill="none" stroke="#ff7f3f" stroke-width="2.3"/><path d="M15 15.5A4.8 4.8 0 1 1 22 19.5C20.5 20.5 19.8 21.5 19.8 23.5V25" fill="none" stroke="#ff7f3f" stroke-width="2.3" stroke-linecap="round"/><circle cx="19.8" cy="29.5" r="1.5" fill="#ff7f3f"/></svg>
</body></html>
